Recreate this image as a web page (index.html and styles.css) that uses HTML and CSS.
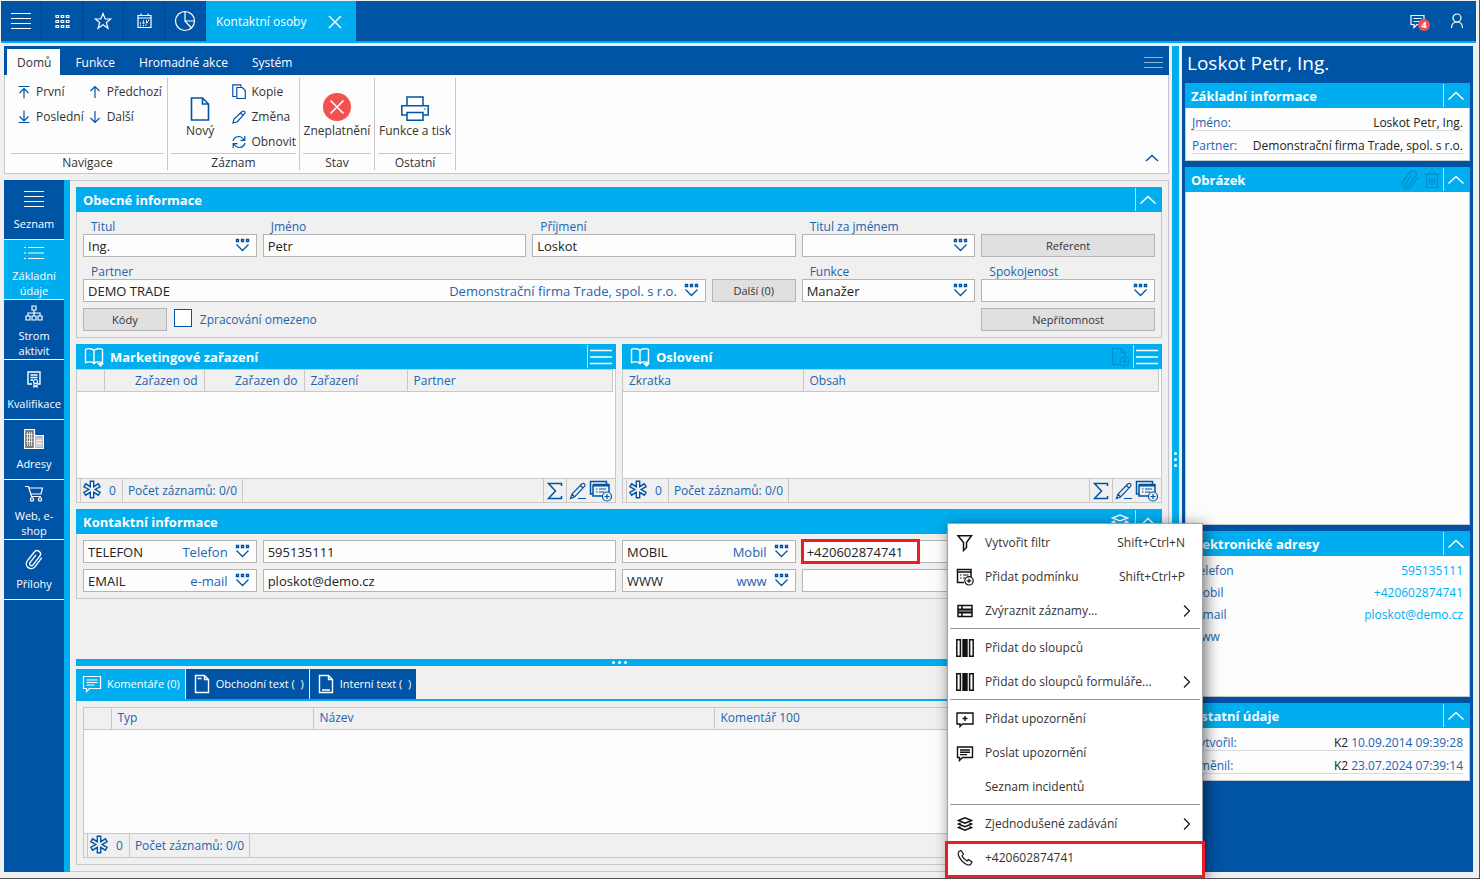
FILE: index.html
```html
<!DOCTYPE html>
<html lang="cs">
<head>
<meta charset="utf-8">
<title>Kontaktní osoby</title>
<link rel="stylesheet" href="styles.css">
</head>
<body>
<svg class="defs" aria-hidden="true">
  <symbol id="i-combo" viewBox="0 0 16 14"><path d="M1.500 1.500h2v2h-2zM6.500 1.500h2v2h-2zM11.500 1.500h2v2h-2z" stroke-width="1.400"/><path d="M1.500 6.500 7.500 12.500 13.500 6.500" stroke-width="1.300"/></symbol>
  <symbol id="i-up" viewBox="0 0 18 10"><path d="M1.500 8.500 9 1.500 16.500 8.500"/></symbol>
  <symbol id="i-lines" viewBox="0 0 22 16"><path d="M0 1.500h22M0 8h22M0 14.500h22"/></symbol>
  <symbol id="i-book" viewBox="0 0 22 20"><path d="M10 3.500C8.500 1.500 4 1 1.500 2.500v13C4 14.500 8.500 14.500 10 16.500 11.500 14.500 16 14.500 18.500 15.500v-13C16 1 11.500 1.500 10 3.500zM10 3.500v13" stroke-width="1.400"/><path d="M13 16h7l-3.500 4z" fill="currentColor" stroke="none"/></symbol>
  <symbol id="i-star" viewBox="0 0 20 20"><path d="M8.300 1.200h3.400v5.500l4.700-2.900 1.700 2.900-4.900 2.800 4.900 2.800-1.700 2.900-4.700-2.900v5.500H8.300v-5.500l-4.700 2.900-1.700-2.900 4.900-2.800-4.900-2.800 1.700-2.900 4.700 2.900z" stroke-width="1.400"/></symbol>
  <symbol id="i-sigma" viewBox="0 0 16 18"><path d="M14.500 4V1.500H1.500L8.500 9l-7 7.500h13V14" stroke-width="1.500"/></symbol>
  <symbol id="i-edit" viewBox="0 0 18 18"><path d="M1.500 16.500 3 12 13 1.800q1.500-1 2.500 0t0 2.700L5.500 15zM11.500 3.500l2.500 2.500M9 16.500h8M3 12l2.500 3"/></symbol>
  <symbol id="i-formadd" viewBox="0 0 24 22"><path d="M4 4.500V16h9M4 14H1.500V1.500h16V4M4 4.500h16V12" stroke-width="1.500"/><path d="M4 5.500h16" stroke-width="2"/><path d="M7 9h1.500M10 9h7M7 12h1.500M10 12h5"/><circle cx="18" cy="16.500" r="4.500"/><path d="M18 14v5M15.500 16.500h5"/></symbol>
  <symbol id="i-clip" viewBox="0 0 24 24"><path d="M20.500 9.500 13 19.500a5.300 5.300 0 0 1-8.500-6.300L12.300 3.300a3.700 3.700 0 0 1 6 4.500L11 17.300a2 2 0 0 1-3.300-2.400l6.500-8.500" stroke-width="1.500"/></symbol>
  <symbol id="i-layers" viewBox="0 0 18 16"><path d="M1.500 4 9 1l7.500 3L9 7zM4 7 1.500 8 9 11l7.500-3L14 7M4 11l-2.500 1L9 15l7.500-3-2.500-1" stroke-width="1.600"/></symbol>
  <symbol id="i-bubble" viewBox="0 0 20 18"><path d="M1.500 1.500h17v12H7.500L4.500 16.500v-3h-3z"/><path d="M4.500 5h11M4.500 7.500h11M4.500 10h8"/></symbol>
  <symbol id="i-right" viewBox="0 0 8 14"><path d="M1 1.500 6.500 7 1 12.500"/></symbol>
  <symbol id="i-cols" viewBox="0 0 18 18"><path d="M.8.800h3.600v16.400H.8zM13.600.800h3.600v16.400h-3.600z" stroke-width="1.500"/><path d="M6.300 0h5.400v18H6.300z" fill="currentColor" stroke="none"/></symbol>
</svg>

<header class="topbar">
  <nav class="topnav">
    <button class="top-btn" aria-label="Menu"><svg width="20" height="18"><path d="M0 1.500h20M0 6.500h20M0 11.500h20M0 16.500h20" stroke-width="1.200"/></svg></button>
    <button class="top-btn" aria-label="Moduly"><svg width="15" height="15"><path d="M1 1.500h2.500v2H1zM6.200 1.500h2.500v2H6.200zM11.400 1.500h2.500v2h-2.500zM1 6.500h2.500v2H1zM6.200 6.500h2.500v2H6.200zM11.400 6.500h2.500v2h-2.500zM1 11.500h2.500v2H1zM6.200 11.500h2.500v2H6.200zM11.400 11.500h2.500v2h-2.500z"/></svg></button>
    <button class="top-btn" aria-label="Oblíbené"><svg width="18" height="18"><path d="M9 1.500 11.200 7H16.800L12.300 10.500 14 16.300 9 12.800 4 16.300 5.700 10.500 1.200 7H6.800z"/></svg></button>
    <button class="top-btn" aria-label="Kalendář"><svg width="15" height="16"><path d="M1 2.500h13v12H1zM1 5h13M4 .5v2M11 .5v2"/><path d="M6 8h1M9 8h1M11 7.500h1M3 10h1M5.500 10h2M9 9.500h2M3 12.500h1M6 12.500h1M8.500 12h1" stroke-width="1.400"/></svg></button>
    <button class="top-btn" aria-label="Grafy"><svg width="22" height="22"><circle cx="11" cy="11" r="9.500"/><path d="M11 1.500V11h9.500M11 11l6.500 7"/></svg></button>
    <div class="top-tab"><a href="#">Kontaktní osoby</a><button aria-label="Zavřít"><svg width="14" height="14"><path d="M1 1 13 13M13 1 1 13" stroke-width="1.400"/></svg></button></div>
  </nav>
  <div class="top-right">
    <button class="notify" aria-label="Zprávy"><svg width="15" height="15"><path d="M1 1.500h13v9H7L4 13.500v-3H1zM3.500 4.500h8M3.500 7.500h8"/></svg><span class="badge">4</span></button>
    <button aria-label="Uživatel"><svg width="14" height="16"><circle cx="7" cy="5" r="4"/><path d="M1.500 15q0-6 5.500-6t5.500 6"/></svg></button>
  </div>
</header>

<div class="shell">
  <div class="left">
    <section class="ribbon">
      <div class="ribbon-tabs">
        <button class="rtab active">Domů</button><button class="rtab">Funkce</button><button class="rtab">Hromadné akce</button><button class="rtab">Systém</button>
        <button class="rmenu" aria-label="Nabídka"><svg width="19" height="13"><path d="M0 1.500h19M0 6.500h19M0 11.500h19"/></svg></button>
      </div>
      <div class="ribbon-body">
        <div class="rgroup nav-group">
          <div class="rcontent">
            <div class="rcol">
              <button class="rsmall"><svg width="14" height="14"><path d="M1.500 1.500h11M7 3v10.500M2.500 8 7 3.500 11.500 8"/></svg>První</button>
              <button class="rsmall"><svg width="14" height="14"><path d="M1.500 12.500h11M7 .5v10.500M2.500 6.500 7 11 11.500 6.500"/></svg>Poslední</button>
            </div>
            <div class="rcol">
              <button class="rsmall"><svg width="14" height="14"><path d="M7 1.500v11.500M2.500 6 7 1.500 11.500 6"/></svg>Předchozí</button>
              <button class="rsmall"><svg width="14" height="14"><path d="M7 1v11.500M2.500 8 7 12.500 11.500 8"/></svg>Další</button>
            </div>
          </div>
          <div class="rcaption">Navigace</div>
        </div>
        <div class="rgroup record-group">
          <div class="rcontent">
            <button class="rbig"><svg width="20" height="24"><path d="M1.500 1h11l6 6v16h-17zM12.500 1v6h6" stroke-width="1.600"/></svg>Nový</button>
            <div class="rcol">
              <button class="rsmall"><svg width="14" height="15"><path d="M4 12.500H.8V.8h8v2M4.800 3.500h5.500l3 3v8H4.800z"/></svg>Kopie</button>
              <button class="rsmall"><svg width="14" height="14"><path d="M1 13 2 9 10 1.500q1.500-1 2.500 0t0 2.500L5 12zM8.500 3l2.500 2.500"/></svg>Změna</button>
              <button class="rsmall"><svg width="14" height="14"><path d="M1 6q1-4 5.500-4.500Q10 1.500 12 5M12.800 1v4.300H8.500M13 8q-1 4-5.500 4.500Q4 12.500 2 9M1.200 13V8.700H5.500"/></svg>Obnovit</button>
            </div>
          </div>
          <div class="rcaption">Záznam</div>
        </div>
        <div class="rgroup state-group">
          <div class="rcontent">
            <button class="rbig"><svg class="invalid" width="28" height="28"><circle cx="14" cy="14" r="14"/><path d="M7.500 7.500l13 13M20.500 7.500l-13 13"/></svg>Zneplatnění</button>
          </div>
          <div class="rcaption">Stav</div>
        </div>
        <div class="rgroup other-group">
          <div class="rcontent">
            <button class="rbig"><svg width="28" height="25"><path d="M6 9V1h16v8M5.500 19H.8V9.800h26.400V19h-4.700M6 16.500h16v7.700H6z" stroke-width="1.500"/><path d="M23 13h1.500"/></svg>Funkce a tisk</button>
          </div>
          <div class="rcaption">Ostatní</div>
        </div>
        <button class="rcollapse" aria-label="Sbalit"><svg width="14" height="8"><path d="M1 7 7 1.500 13 7" stroke-width="1.400"/></svg></button>
      </div>
    </section>

    <div class="work">
      <nav class="side">
        <button class="side-btn"><i><svg width="20" height="18"><path d="M0 1.500h20M0 6.500h20M0 11.500h20M0 16.500h20" stroke-width="1.200"/></svg></i><span>Seznam</span></button>
        <button class="side-btn two active"><i><svg width="20" height="14"><path d="M4 1.500h16M4 7h16M4 12.500h16M0 1.500h2M0 7h2M0 12.500h2" stroke-width="1.200"/></svg></i><span>Základní údaje</span></button>
        <button class="side-btn two"><i><svg width="18" height="16"><path d="M7 1h4v4H7zM1 11h4v4H1zM7 11h4v4H7zM13 11h4v4h-4zM9 5v6M3 11V8h12v3"/></svg></i><span>Strom aktivit</span></button>
        <button class="side-btn"><i><svg width="14" height="17"><path d="M5 13H1V1h12v12h-2M3.500 4h7M3.500 6.500h7M3.500 9H6" stroke-width="1.400"/><circle cx="8.500" cy="10.500" r="2"/><path d="M7 12v4l1.500-1.200L10 16v-4"/></svg></i><span>Kvalifikace</span></button>
        <button class="side-btn"><i><svg width="20" height="20"><path d="M.5.500h10v19H.5z" fill="#7d7d7d"/><path d="M10.500 6.500h9v13h-9z" fill="#b4b8be"/><path d="M3.500 3v14M5.500 3v14M7.500 3v14M2 5.500h7M2 9h7M2 12.500h7M13 9v9M15 9v9M17 9v9M12 11.500h6M12 14.500h6" stroke-width=".7"/></svg></i><span>Adresy</span></button>
        <button class="side-btn two"><i><svg width="19" height="17"><path d="M0 1.500h3.500L6.500 11.500H16M4 3h13.500L16 9H6"/><circle cx="7" cy="14.500" r="1.600"/><circle cx="15" cy="14.500" r="1.600"/></svg></i><span>Web, e-shop</span></button>
        <button class="side-btn"><i><svg width="22" height="22"><use href="#i-clip"/></svg></i><span>Přílohy</span></button>
      </nav>

      <main class="content">
        <section class="panel">
          <h2 class="panel-head">Obecné informace<button class="head-btn" aria-label="Sbalit"><svg width="18" height="10"><use href="#i-up"/></svg></button></h2>
          <div class="form">
            <div class="field s2"><label for="titul">Titul</label><div class="box"><input id="titul" value="Ing."><button aria-label="Vybrat"><svg width="16" height="14"><use href="#i-combo"/></svg></button></div></div>
            <div class="field s3"><label for="jmeno">Jméno</label><div class="box"><input id="jmeno" value="Petr"></div></div>
            <div class="field s3"><label for="prijmeni">Příjmení</label><div class="box"><input id="prijmeni" value="Loskot"></div></div>
            <div class="field s2"><label for="titulza">Titul za jménem</label><div class="box"><input id="titulza"><button aria-label="Vybrat"><svg width="16" height="14"><use href="#i-combo"/></svg></button></div></div>
            <button class="btn s2">Referent</button>
            <div class="field s7"><label for="partner">Partner</label><div class="box"><input id="partner" value="DEMO TRADE"><span class="desc">Demonstrační firma Trade, spol. s r.o.</span><button aria-label="Vybrat"><svg width="16" height="14"><use href="#i-combo"/></svg></button></div></div>
            <button class="btn">Další (0)</button>
            <div class="field s2"><label for="funkce">Funkce</label><div class="box"><input id="funkce" value="Manažer"><button aria-label="Vybrat"><svg width="16" height="14"><use href="#i-combo"/></svg></button></div></div>
            <div class="field s2"><label for="spok">Spokojenost</label><div class="box"><input id="spok"><button aria-label="Vybrat"><svg width="16" height="14"><use href="#i-combo"/></svg></button></div></div>
            <button class="btn">Kódy</button>
            <label class="check s9"><input type="checkbox">Zpracování omezeno</label>
            <button class="btn s2">Nepřítomnost</button>
          </div>
        </section>

        <div class="pair">
          <section class="panel grid-panel">
            <h2 class="panel-head"><svg width="22" height="20"><use href="#i-book"/></svg>Marketingové zařazení<button class="head-btn wide" aria-label="Nabídka"><svg width="22" height="16"><use href="#i-lines"/></svg></button></h2>
            <table class="grid"><colgroup><col class="c27"><col class="c100"><col class="c100"><col class="c103"><col></colgroup>
              <thead><tr><th></th><th class="r">Zařazen od</th><th class="r">Zařazen do</th><th>Zařazení</th><th>Partner</th></tr></thead></table>
            <div class="grid-space"></div>
            <footer class="grid-foot"><div class="cell star"><svg width="20" height="20"><use href="#i-star"/></svg>0</div><div class="cell">Počet záznamů: 0/0</div><div class="tools"><button aria-label="Součet"><svg width="16" height="18"><use href="#i-sigma"/></svg></button><button aria-label="Upravit"><svg width="18" height="18"><use href="#i-edit"/></svg></button><button aria-label="Přidat"><svg width="24" height="22"><use href="#i-formadd"/></svg></button></div></footer>
          </section>
          <section class="panel grid-panel">
            <h2 class="panel-head"><svg width="22" height="20"><use href="#i-book"/></svg>Oslovení<button class="dim" aria-label="Nový záznam"><svg width="19" height="20"><path d="M8 17.500H1.500v-16h8.500l4 4V10M10 1.500v4h4M4 5v1M4 8v1M4 11v1M4 14v1"/><circle cx="13.500" cy="14.500" r="4.500"/><path d="M13.500 12v5M11 14.500h5"/></svg></button><button class="head-btn wide" aria-label="Nabídka"><svg width="22" height="16"><use href="#i-lines"/></svg></button></h2>
            <table class="grid"><colgroup><col class="c180"><col></colgroup><thead><tr><th>Zkratka</th><th>Obsah</th></tr></thead></table>
            <div class="grid-space"></div>
            <footer class="grid-foot"><div class="cell star"><svg width="20" height="20"><use href="#i-star"/></svg>0</div><div class="cell">Počet záznamů: 0/0</div><div class="tools"><button aria-label="Součet"><svg width="16" height="18"><use href="#i-sigma"/></svg></button><button aria-label="Upravit"><svg width="18" height="18"><use href="#i-edit"/></svg></button><button aria-label="Přidat"><svg width="24" height="22"><use href="#i-formadd"/></svg></button></div></footer>
          </section>
        </div>

        <section class="panel">
          <h2 class="panel-head">Kontaktní informace<button class="plain" aria-label="Vrstvy"><svg width="18" height="16"><use href="#i-layers"/></svg></button><button class="head-btn" aria-label="Sbalit"><svg width="18" height="10"><use href="#i-up"/></svg></button></h2>
          <div class="form">
            <div class="box s2"><input aria-label="Typ adresy 1" value="TELEFON"><span class="desc">Telefon</span><button aria-label="Vybrat"><svg width="16" height="14"><use href="#i-combo"/></svg></button></div>
            <div class="box s4"><input aria-label="Telefon" value="595135111"></div>
            <div class="box s2"><input aria-label="Typ adresy 2" value="MOBIL"><span class="desc">Mobil</span><button aria-label="Vybrat"><svg width="16" height="14"><use href="#i-combo"/></svg></button></div>
            <div class="box s4 marked"><input aria-label="Mobil" value="+420602874741"></div>
            <div class="box s2"><input aria-label="Typ adresy 3" value="EMAIL"><span class="desc">e-mail</span><button aria-label="Vybrat"><svg width="16" height="14"><use href="#i-combo"/></svg></button></div>
            <div class="box s4"><input aria-label="E-mail" value="ploskot@demo.cz"></div>
            <div class="box s2"><input aria-label="Typ adresy 4" value="WWW"><span class="desc">www</span><button aria-label="Vybrat"><svg width="16" height="14"><use href="#i-combo"/></svg></button></div>
            <div class="box s4"><input aria-label="WWW"></div>
          </div>
        </section>

        <section class="lower">
          <div class="hsplit"><i></i><i></i><i></i></div>
          <div class="tabs">
            <button class="tab active"><svg width="20" height="18"><use href="#i-bubble"/></svg>Komentáře (0)</button>
            <button class="tab"><svg width="16" height="20"><path d="M1.500 1.500h9l4 4v13h-13zM10.500 1.500v4h4M3.500 4.500h4" stroke-width="1.400"/></svg>Obchodní text (&nbsp; )</button>
            <button class="tab"><svg width="16" height="20"><path d="M1.500 1.500h9l4 4v13h-13zM10.500 1.500v4h4M4 16h8" stroke-width="1.400"/></svg>Interní text (&nbsp; )</button>
          </div>
          <div class="comments">
            <div class="comment-grid">
              <table class="grid"><colgroup><col class="c27"><col class="c202"><col class="c401"><col></colgroup><thead><tr><th></th><th>Typ</th><th>Název</th><th>Komentář 100</th></tr></thead></table>
              <div class="grid-space"></div>
              <footer class="grid-foot"><div class="cell star"><svg width="20" height="20"><use href="#i-star"/></svg>0</div><div class="cell">Počet záznamů: 0/0</div></footer>
            </div>
          </div>
        </section>
      </main>
    </div>
  </div>

  <div class="vsplit"><i></i><i></i><i></i></div>

  <aside class="preview">
    <h1>Loskot Petr, Ing.</h1>
    <section class="card">
      <h2 class="panel-head">Základní informace<button class="head-btn" aria-label="Sbalit"><svg width="18" height="10"><use href="#i-up"/></svg></button></h2>
      <div class="rows lined"><div class="row"><span>Jméno:</span><b>Loskot Petr, Ing.</b></div><div class="row"><span>Partner:</span><b>Demonstrační firma Trade, spol. s r.o.</b></div></div>
    </section>
    <section class="card">
      <h2 class="panel-head">Obrázek<button class="dim" aria-label="Připojit"><svg width="22" height="22"><use href="#i-clip"/></svg></button><button class="dim" aria-label="Smazat"><svg width="16" height="18"><path d="M1 3.500h14M5.500 3.500V1h5v2.500M2.500 3.500v13h11v-13M5.500 7v7M8 7v7M10.500 7v7"/></svg></button><button class="head-btn" aria-label="Sbalit"><svg width="18" height="10"><use href="#i-up"/></svg></button></h2>
      <div class="picture"></div>
    </section>
    <section class="card">
      <h2 class="panel-head">Elektronické adresy<button class="head-btn" aria-label="Sbalit"><svg width="18" height="10"><use href="#i-up"/></svg></button></h2>
      <div class="rows contacts"><div class="row"><span>Telefon</span><a href="#">595135111</a></div><div class="row"><span>Mobil</span><a href="#">+420602874741</a></div><div class="row"><span>e-mail</span><a href="#">ploskot@demo.cz</a></div><div class="row"><span>www</span></div></div>
    </section>
    <section class="card">
      <h2 class="panel-head">Ostatní údaje<button class="head-btn" aria-label="Sbalit"><svg width="18" height="10"><use href="#i-up"/></svg></button></h2>
      <div class="rows lined"><div class="row"><span>Vytvořil:</span><b>K2 <span>10.09.2014 09:39:28</span></b></div><div class="row"><span>Změnil:</span><b>K2 <span>23.07.2024 07:39:14</span></b></div></div>
    </section>
  </aside>
</div>

<div class="menu" role="menu">
  <button role="menuitem"><svg width="18" height="18"><path d="M2 1.800h13.500L10.500 8.500v5l-3 3v-8z" stroke-width="1.500"/></svg>Vytvořit filtr<kbd>Shift+Ctrl+N</kbd></button>
  <button role="menuitem"><svg width="18" height="18"><path d="M8 14.500H1.500v-13H15V9M1.500 4H15" stroke-width="1.500"/><path d="M4 7h1.500M7 7h5.500M4 10h1.500M7 10h2"/><circle cx="13" cy="12.800" r="4.200"/><path d="M13 10.500v4.600M10.700 12.800h4.600"/></svg>Přidat podmínku<kbd>Shift+Ctrl+P</kbd></button>
  <button role="menuitem"><svg width="18" height="14"><path d="M2 7h14" stroke="#666" stroke-width="3"/><path d="M2 1.500h14v11H2zM6 1.500v3.500M6 9v3.500M2 5.200h14M2 8.800h14" stroke-width="1.500"/></svg>Zvýraznit záznamy...<svg class="sub" width="8" height="14"><use href="#i-right"/></svg></button>
  <hr>
  <button role="menuitem"><svg width="18" height="18"><use href="#i-cols"/></svg>Přidat do sloupců</button>
  <button role="menuitem"><svg width="18" height="18"><use href="#i-cols"/></svg>Přidat do sloupců formuláře...<svg class="sub" width="8" height="14"><use href="#i-right"/></svg></button>
  <hr>
  <button role="menuitem"><svg width="18" height="17"><path d="M1 2h16v11H6.500L4 15.500V13H1zM9 5v5M6.500 7.500h5" stroke-width="1.400"/></svg>Přidat upozornění</button>
  <button role="menuitem"><svg width="18" height="17"><path d="M1.500 2h15v10.500H6.500L3.500 15.500v-3h-2zM4 5h10M4 7.300h10M4 9.600h7" stroke-width="1.400"/></svg>Poslat upozornění</button>
  <button role="menuitem"><svg width="18" height="18"></svg>Seznam incidentů</button>
  <hr>
  <button role="menuitem"><svg width="18" height="14" viewBox="0 0 18 16"><use href="#i-layers"/></svg>Zjednodušené zadávání<svg class="sub" width="8" height="14"><use href="#i-right"/></svg></button>
  <button role="menuitem" class="call"><svg width="18" height="18"><path d="M3 2.500 5 1.500 7.500 5 6 7q1.500 3 5 5l1.500-1.500L16 13l-1.500 2.500q-1.500 1-4 0Q4.500 12 2.300 6 1.800 3.500 3 2.500z"/></svg>+420602874741</button>
</div>
</body>
</html>
```
FILE: styles.css
```css
:root {
  --blue: #0054a6;
  --cyan: #00aeef;
  --gray: #f0f0f0;
  --line: #c8c8c8;
  --edge: #b4b4b4;
  --paper: #fdfdfd;
  --red: #ed1c24;
}
*, *::after { box-sizing: border-box; }
html { background: #f0f0f0; }
body {
  position: relative;
  display: flex;
  flex-direction: column;
  min-height: 100vh;
  margin: 0;
  padding: 1px 3px 6px 1px;
  border-right: 1px solid #50505a;
  border-bottom: 1px solid #50505a;
  background: var(--gray);
  color: #222;
  font: 12px/16px "Open Sans", "Noto Sans", sans-serif;
}
button, input { font: inherit; color: inherit; }
button { margin: 0; padding: 0; border: 0; background: none; }
a { color: inherit; text-decoration: none; }
h1, h2 { margin: 0; }
svg { display: block; flex: none; fill: none; stroke: currentColor; stroke-width: 1.2; }
.defs { position: absolute; width: 0; height: 0; }

.topbar {
  display: flex;
  justify-content: space-between;
  height: 42px;
  background: var(--blue);
  border-bottom: 2px solid var(--cyan);
  color: #fff;
}
.topnav { display: flex; }
.top-btn {
  display: grid;
  place-items: center;
  width: 41px;
  border-right: 1px solid #00458c;
}
.top-tab {
  display: flex;
  align-items: center;
  justify-content: space-between;
  width: 150px;
  padding: 1px 14px 0 10px;
  background: var(--cyan);
  font-weight: 500;
}
.top-right { display: flex; align-items: center; gap: 22px; padding-right: 12px; }
.notify { position: relative; padding-right: 3px; }
.badge {
  position: absolute;
  right: -2px;
  top: 5px;
  width: 12px;
  height: 12px;
  border-radius: 50%;
  background: #f55050;
  font-size: 9px;
  font-weight: 700;
  line-height: 12px;
}

.shell { flex: 1; display: flex; gap: 3px; padding: 3px 3px 0; }
.left { flex: 1; min-width: 0; display: flex; flex-direction: column; gap: 6px; }
.vsplit {
  display: flex;
  flex-direction: column;
  align-items: center;
  justify-content: center;
  gap: 3px;
  width: 7px;
  background: var(--cyan);
}
.vsplit i, .hsplit i { width: 3px; height: 3px; border-radius: 50%; background: #fff; }

.ribbon-tabs {
  display: flex;
  height: 29px;
  padding: 3px 6px 0 3px;
  background: var(--blue);
  color: #fff;
}
.rtab { padding: 1px 12px 0; font-weight: 500; }
.rtab.active { margin-right: 3px; padding: 1px 9px 0 10px; background: var(--paper); color: #333; font-weight: 400; }
.rmenu { margin-left: auto; color: #8fb6dc; }
.ribbon-body {
  display: flex;
  height: 99px;
  padding: 3px 0 3px;
  border: 1px solid var(--line);
  border-top: 0;
  background: var(--paper);
}
.rgroup {
  display: flex;
  flex-direction: column;
  padding: 0 3px;
  border-right: 1px solid var(--line);
}
.nav-group { width: 163px; padding-left: 6px; }
.record-group { width: 132px; }
.state-group { width: 75px; }
.other-group { width: 81px; }
.rcontent { display: flex; flex: 1; }
.nav-group .rcontent { gap: 4px; padding-left: 6px; }
.record-group .rcontent { gap: 3px; }
.rcol { display: flex; flex-direction: column; }
.rsmall { display: flex; align-items: center; gap: 5px; height: 25px; padding-top: 2px; color: #333; }
.rsmall svg, .rbig svg { color: var(--blue); }
.rbig {
  display: flex;
  flex: 1;
  flex-direction: column;
  align-items: center;
  justify-content: flex-end;
  gap: 2px;
  padding-bottom: 14px;
  white-space: nowrap;
  color: #333;
}
.rbig .invalid circle { fill: #f55050; stroke: none; }
.rbig .invalid path { stroke: #fff; stroke-width: 1.6; }
.rcaption { height: 17px; border-top: 1px solid var(--line); text-align: center; line-height: 18px; color: #333; }
.rcollapse { align-self: flex-end; margin: 0 9px 8px auto; color: var(--blue); }

.work { flex: 1; display: flex; }
.side {
  width: 66px;
  border-right: 6px solid var(--cyan);
  background: var(--blue);
  color: #fff;
}
.side-btn {
  display: flex;
  flex-direction: column;
  align-items: center;
  gap: 7px;
  width: 100%;
  height: 60px;
  padding: 9px 0 0;
  border-bottom: 1px solid #fff;
  font-size: 11px;
  line-height: 15px;
  overflow: hidden;
}
.side-btn i { display: grid; place-items: center; height: 20px; }
.side-btn span { padding: 0 6px; }
.side-btn.two { gap: 5px; padding-top: 3px; }
.side-btn.active { background: var(--cyan); }

.content {
  flex: 1;
  min-width: 0;
  display: flex;
  flex-direction: column;
  gap: 6px;
  padding: 6px;
  border: 1px solid var(--line);
  border-left: 0;
}
.panel { border: 1px solid var(--line); border-top: 0; }
.panel-head {
  display: flex;
  align-items: center;
  gap: 3px;
  height: 25px;
  margin: 0 -1px;
  padding: 0 0 0 7px;
  background: var(--cyan);
  color: #fff;
  font-size: 13px;
  font-weight: 700;
}
.panel-head > svg { margin: 0 1px; }
.head-btn {
  display: grid;
  place-items: center;
  width: 27px;
  height: 23px;
  padding-right: 3px;
  border-left: 1px solid #b9dff0;
}
.head-btn.wide { width: 29px; padding-right: 2px; }
.head-btn svg { stroke-width: 1.5; }
.panel-head button:first-of-type { margin-left: auto; }
.plain { margin-right: 3px; }
.dim { color: #008fcb; }
.form { display: grid; grid-template-columns: repeat(12, minmax(0, 1fr)); gap: 6px; padding: 6px; }
.s2 { grid-column: span 2; }
.s3 { grid-column: span 3; }
.s4 { grid-column: span 4; }
.s7 { grid-column: span 7; }
.s9 { grid-column: span 9; }
.field label { display: block; height: 16px; padding-left: 8px; line-height: 18px; color: #1b64b0; }
.box {
  position: relative;
  display: flex;
  align-items: center;
  height: 23px;
  padding: 0 5px 0 4px;
  border: 1px solid var(--edge);
  background: var(--paper);
  font-size: 13px;
  color: #222;
}
.box input { flex: 1; min-width: 0; padding: 0; border: 0; outline: 0; background: none; }
.desc { margin-right: 7px; color: #1b64b0; }
.box button { padding-bottom: 2px; color: var(--blue); }
.marked::after {
  content: "";
  position: absolute;
  left: -2px;
  top: -2px;
  width: 119px;
  height: 25px;
  border: 3px solid var(--red);
}
.btn { align-self: end; height: 23px; border: 1px solid var(--edge); background: #e0e0e0; font-size: 11px; color: #333; }
.check { display: flex; align-items: center; gap: 8px; color: #1b64b0; }
.check input {
  appearance: none;
  width: 18px;
  height: 18px;
  margin: 0 0 3px 1px;
  border: 1px solid var(--blue);
  background: #fff;
}

.pair { display: grid; grid-template-columns: 1fr 1fr; gap: 6px; }
.grid-panel { background: var(--paper); }
.grid-panel .grid { width: calc(100% - 2px); }
.grid { width: 100%; table-layout: fixed; border-collapse: collapse; background: var(--gray); color: #1b64b0; }
.grid th {
  height: 22px;
  padding: 0 6px;
  border: 1px solid var(--line);
  border-left: 0;
  font-weight: 400;
  text-align: left;
}
.grid th.r { text-align: right; }
.c27 { width: 27px; }
.c100 { width: 100px; }
.c103 { width: 103px; }
.c180 { width: 180px; }
.c202 { width: 202px; }
.c401 { width: 401px; }
.grid-space { height: 86px; }
.grid-foot {
  display: flex;
  height: 24px;
  padding-left: 3px;
  border-top: 1px solid var(--line);
  background: var(--gray);
  color: #1b64b0;
}
.cell { display: flex; align-items: center; padding: 1px 5px 0; border-right: 1px solid var(--line); }
.cell.star { gap: 7px; padding: 1px 6px 0 1px; border-left: 1px solid var(--line); }
.cell.star svg { margin-bottom: 2px; color: var(--blue); }
.tools { display: flex; align-items: center; gap: 2px; margin-left: auto; padding-right: 2px; border-left: 1px solid var(--line); color: var(--blue); }
.tools button { display: grid; place-items: center; height: 100%; }
.tools button:first-child { width: 23px; border-right: 1px solid var(--line); }

.lower { flex: 1; display: flex; flex-direction: column; margin-top: 54px; }
.hsplit { display: flex; align-items: center; justify-content: center; gap: 3px; height: 7px; margin-bottom: 3px; background: var(--cyan); }
.tabs { display: flex; gap: 1px; height: 32px; border-bottom: 2px solid var(--cyan); }
.tab { display: flex; align-items: center; gap: 6px; padding: 0 5px 0 8px; background: var(--blue); color: #fff; font-size: 11px; }
.tab.active { gap: 5px; padding-left: 6px; background: var(--cyan); }
.comments { flex: 1; display: flex; padding: 6px; border: 1px solid var(--line); border-top: 0; }
.comment-grid { flex: 1; display: flex; flex-direction: column; border: 1px solid var(--line); background: var(--paper); }
.comment-grid .grid-space { flex: 1; }
.comment-grid .grid th { height: 21px; border-top: 0; }
.comment-grid .grid th:last-child { border-right: 0; }

.preview { display: flex; flex-direction: column; gap: 6px; width: 291px; padding: 0 3px; background: var(--blue); color: #fff; }
.preview h1 { height: 31px; padding: 4px 2px 0; font-size: 19px; line-height: 27px; font-weight: 400; }
.card { border: 1px solid var(--line); border-top: 0; background: var(--paper); color: #222; }
.card .panel-head { padding-left: 6px; }
.rows { padding: 2px 6px 6px; }
.row { display: flex; justify-content: space-between; height: 22px; line-height: 26px; color: #1b64b0; }
.lined { padding-top: 0; }
.lined .row { height: 23px; padding-top: 4px; border-bottom: 1px solid #dcdcdc; line-height: 22px; }
.row b { color: #222; font-weight: 400; }
.row b span { color: #1b64b0; }
.row a { color: var(--cyan); }
.picture { height: 332px; }
.contacts { height: 140px; }

.menu {
  position: absolute;
  left: 947px;
  top: 523px;
  width: 256px;
  padding: 2px;
  border: 1px solid #a0a0a0;
  background: #fff;
  box-shadow: 3px 3px 14px rgba(0, 0, 0, .55);
}
.menu button { position: relative; display: flex; align-items: center; gap: 11px; width: 100%; height: 34px; padding: 0 9px 0 6px; color: #333; }
.menu button > svg { color: #111; }
.menu kbd { margin-left: auto; padding-right: 6px; font: inherit; }
.menu .sub { margin-left: auto; }
.menu hr { height: 1px; margin: 0 0 2px; border: 0; background: #969696; }
.menu .call::after { content: ""; position: absolute; inset: 0 -5px -3px; border: 3px solid var(--red); }
```
